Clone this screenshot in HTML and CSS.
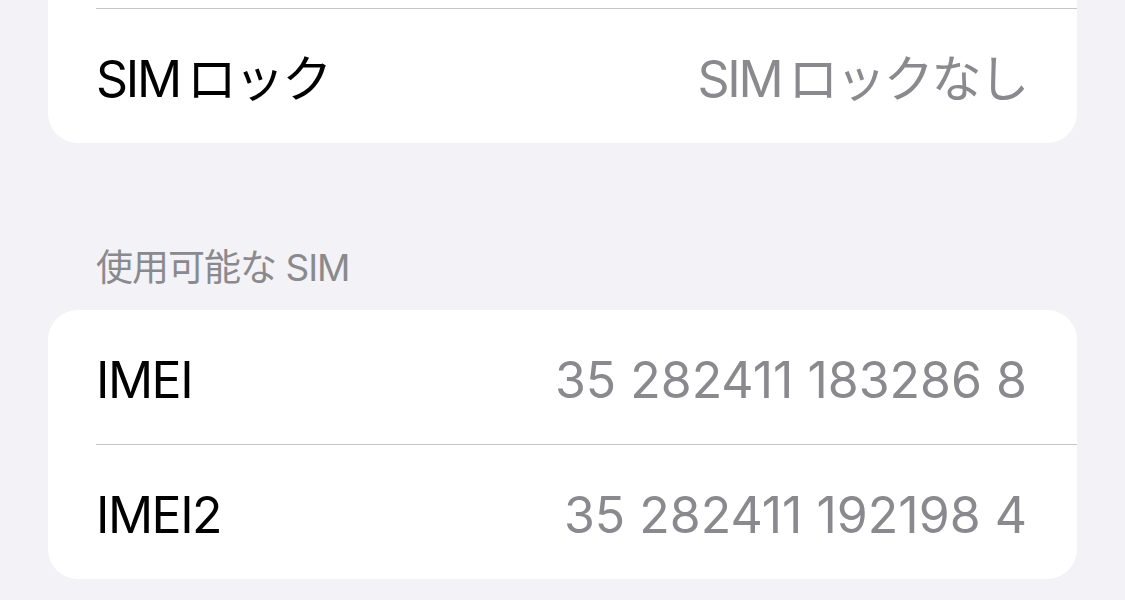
FILE: index.html
```html
<!DOCTYPE html>
<html lang="ja">
<head>
<meta charset="utf-8">
<link rel="stylesheet" href="styles.css">
</head>
<body>
<div class="page">
  <div class="card card-cut">
    <div class="cut-top"></div>
    <div class="row">
      <span class="label jp">SIM&#8201;ロック</span>
      <span class="value jp">SIM&#8201;ロックなし</span>
    </div>
  </div>
  <div class="section-header">使用可能な SIM</div>
  <div class="card">
    <div class="row">
      <span class="label tight">IMEI</span>
      <span class="value">35 282411 183286 8</span>
    </div>
    <div class="row">
      <span class="label tight">IMEI2</span>
      <span class="value">35 282411 192198 4</span>
    </div>
  </div>
</div>
</body>
</html>
```

FILE: styles.css
```css
html, body {
  margin: 0;
  padding: 0;
  background: #f2f2f7;
}
body {
  font-family: "Inter", "Noto Sans CJK JP", sans-serif;
  -webkit-font-smoothing: antialiased;
}
.page {
  width: 1029px;
  margin-left: 48px;
  display: flex;
  flex-direction: column;
}
.card {
  background: #ffffff;
  border-radius: 30px;
  display: flex;
  flex-direction: column;
}
.card-cut {
  border-top-left-radius: 0;
  border-top-right-radius: 0;
}
.cut-top {
  height: 8px;
}
.row {
  height: 128px;
  padding-top: 6px;
  margin-left: 48px;
  padding-right: 50px;
  display: flex;
  align-items: center;
  justify-content: space-between;
  border-top: 1px solid #c6c6c8;
  font-size: 50px;
  line-height: 1;
  white-space: nowrap;
}
.card > .row:first-child {
  border-top: none;
}
.label {
  color: #000000;
}
.value {
  color: #8a8a8e;
}
.tight {
  letter-spacing: -1.5px;
}
.jp {
  letter-spacing: -2.25px;
}
.section-header {
  margin: 106px 0 0 48px;
  height: 61px;
  font-size: 37px;
  line-height: 1;
  letter-spacing: -1px;
  color: #8a8a8e;
}
```
